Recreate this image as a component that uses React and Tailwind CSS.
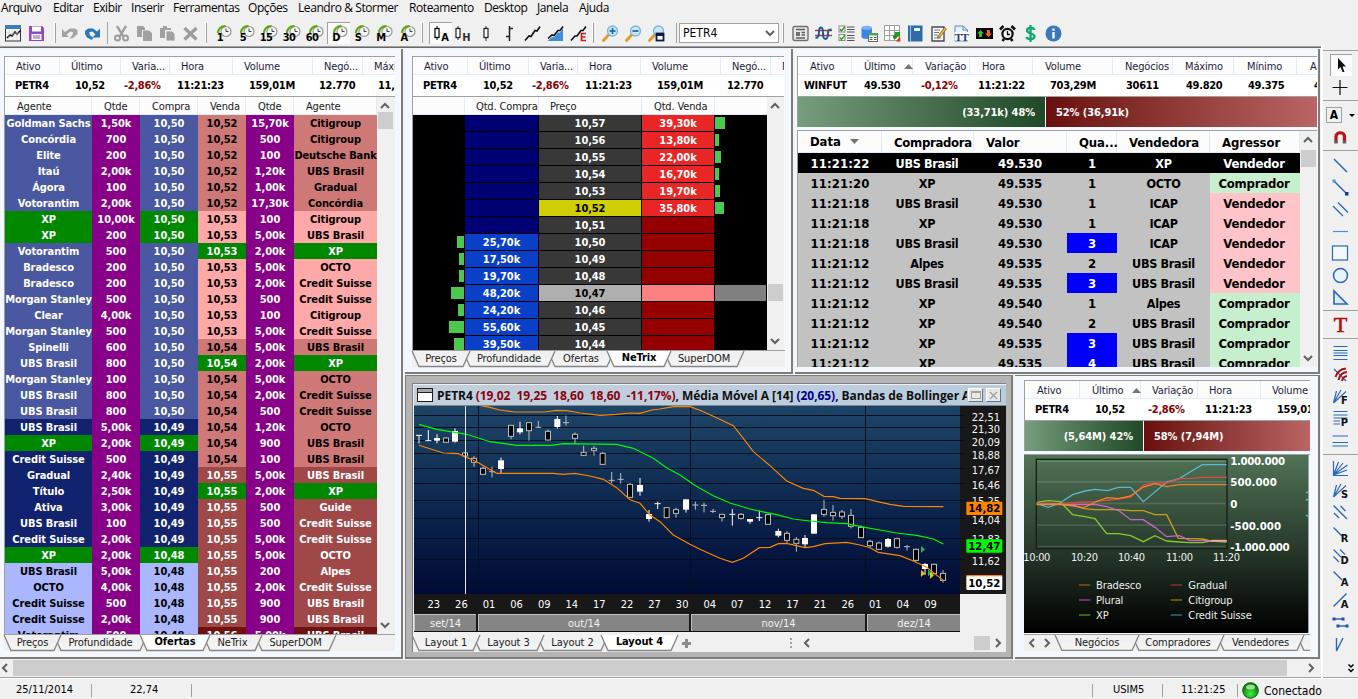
import React from "react";

/* ---------- shared pieces ---------- */

function Chevron({ d, className = "" }) {
  const pts = {
    up: "1,7 5,3 9,7",
    down: "1,3 5,7 9,3",
    left: "7,1 3,5 7,9",
    right: "3,1 7,5 3,9",
  }[d];
  return (
    <svg width="10" height="10" viewBox="0 0 10 10" className={className}>
      <polyline points={pts} fill="none" stroke="#606060" strokeWidth="2" />
    </svg>
  );
}

function VScroll({ thumb }) {
  return (
    <div className="flex w-[18px] flex-none flex-col items-center bg-[#f0f0f0] pl-px">
      <Chevron d="up" className="-ml-[3px] mt-[4px] flex-none" />
      <div className={"-ml-[2px] w-[15px] flex-none bg-[#cdcdcd] " + thumb} />
      <div className="flex-1" />
      <Chevron d="down" className="-ml-[3px] mb-[4px] flex-none" />
    </div>
  );
}

function SortMark({ down }) {
  return (
    <svg width="9" height="5" viewBox="0 0 9 5" className="flex-none">
      <polygon points={down ? "0,0 9,0 4.5,5" : "4.5,0 9,5 0,5"} fill="#757575" />
    </svg>
  );
}

function Ticker({ cols, className = "" }) {
  return (
    <div className={"flex flex-none overflow-hidden border-l border-t border-[#a0a0a0] bg-white " + className}>
      {cols.map((c, i) => (
        <div key={i} className={"h-[39px] flex-none " + c.w}>
          <div className={"flex h-[18px] items-center gap-[9px] whitespace-nowrap border-b border-r border-[#e2ecf8] bg-[#fcfcfc] pt-[2px] leading-[15px] tracking-[-0.15px] text-[#1c1c3c] " + c.hp}>
            {c.h}
            {c.sort && <SortMark />}
          </div>
          <div className={"whitespace-nowrap font-bold leading-[21px] tracking-[-0.3px] " + c.vp + (c.neg ? " text-[#8b0000]" : "")}>{c.v}</div>
        </div>
      ))}
    </div>
  );
}

const petrCols = [
  { w: "w-[55px]", h: "Ativo", hp: "pl-[11px]", v: "PETR4", vp: "pl-[10px]" },
  { w: "w-[61px]", h: "Último", hp: "pl-[11px]", v: "10,52", vp: "pl-[15px]" },
  { w: "w-[49px]", h: "Varia...", hp: "pl-[11px]", v: "-2,86%", vp: "pl-[3px]", neg: true },
  { w: "w-[63px]", h: "Hora", hp: "pl-[11px]", v: "11:21:23", vp: "pl-[7px]" },
  { w: "w-[80px]", h: "Volume", hp: "pl-[11px]", v: "159,01M", vp: "pl-[16px]" },
  { w: "w-[50px]", h: "Negó...", hp: "pl-[11px]", v: "12.770", vp: "pl-[6px]" },
  { w: "w-[64px]", h: "Máximo", hp: "pl-[11px]", v: "11,04", vp: "pl-[15px]" },
];

const petrColsSorted = [
  { w: "w-[55px]", h: "Ativo", hp: "pl-[12px]", v: "PETR4", vp: "pl-[10px]" },
  { w: "w-[61px]", h: "Último", hp: "pl-[12px]", v: "10,52", vp: "pl-[15px]", sort: true },
  { w: "w-[57px]", h: "Variação", hp: "pl-[11px]", v: "-2,86%", vp: "pl-[7px]", neg: true },
  { w: "w-[63px]", h: "Hora", hp: "pl-[11px]", v: "11:21:23", vp: "pl-[7px]" },
  { w: "w-[80px]", h: "Volume", hp: "pl-[11px]", v: "159,01M", vp: "pl-[16px]" },
];

const winCols = [
  { w: "w-[54px]", h: "Ativo", hp: "pl-[12px]", v: "WINFUT", vp: "pl-[6px]" },
  { w: "w-[61px]", h: "Último", hp: "pl-[12px]", v: "49.530", vp: "pl-[12px]", sort: true },
  { w: "w-[57px]", h: "Variação", hp: "pl-[12px]", v: "-0,12%", vp: "pl-[8px]", neg: true },
  { w: "w-[63px]", h: "Hora", hp: "pl-[12px]", v: "11:21:22", vp: "pl-[8px]" },
  { w: "w-[80px]", h: "Volume", hp: "pl-[12px]", v: "703,29M", vp: "pl-[17px]" },
  { w: "w-[60px]", h: "Negócios", hp: "pl-[12px]", v: "30611", vp: "pl-[13px]" },
  { w: "w-[61px]", h: "Máximo", hp: "pl-[12px]", v: "49.820", vp: "pl-[13px]" },
  { w: "w-[63px]", h: "Mínimo", hp: "pl-[13px]", v: "49.375", vp: "pl-[14px]" },
  { w: "w-[40px]", h: "Abertura", hp: "pl-[13px]", v: "49.500", vp: "pl-[17px]" },
];

function Tab({ w, label, active, first }) {
  const mid = w - 7;
  return (
    <div className={"relative flex h-[17px] flex-none items-center justify-center whitespace-nowrap " + (first ? "" : "-ml-[7px] ") + (active ? "z-10 font-bold tracking-[-0.1px]" : "tracking-[-0.1px] text-[#202020]")} style={{ width: w }}>
      <svg width={w} height="17" viewBox={"0 0 " + w + " 17"} className="absolute left-0 top-0 overflow-visible">
        {active ? (
          <polygon points={"0,0 7,16 " + mid + ",16 " + w + ",0"} fill="#ffffff" />
        ) : (
          <polygon points={"4,8 7,16 " + mid + ",16 " + (w - 4) + ",8"} fill="#f3f3f3" />
        )}
        <polyline points={(active || first ? "0,0 " : "3.5,8 ") + "7,15.5 " + mid + ",15.5 " + w + ",0"} fill="none" stroke="#858585" strokeWidth="1.3" />
      </svg>
      <span className={"relative " + (active ? "-top-px" : "")}>{label}</span>
    </div>
  );
}

function Tabs({ tabs, className = "", children, line = true }) {
  return (
    <div className={"flex h-[17px] flex-none bg-[#f0f0f0] " + (line ? "border-t border-[#a0a0a0] " : "") + className}>
      {children}
      {tabs.map((t, i) => (
        <Tab key={i} first={i === 0} w={t[0]} label={t[1]} active={t[2]} />
      ))}
    </div>
  );
}

function Ratio({ left, right, lw }) {
  return (
    <div className="flex h-[31px] flex-none border-l border-t border-[#a0a0a0] font-bold leading-[31px] tracking-[-0.1px] text-white">
      <div className={"mr-px h-[30px] flex-none bg-linear-to-r from-[#769d7d] to-[#1f4927] pr-[10px] text-right " + lw}>{left}</div>
      <div className="h-[30px] flex-1 overflow-hidden whitespace-nowrap bg-linear-to-r from-[#690e0e] to-[#b96565] pl-[10px]">{right}</div>
    </div>
  );
}

/* ---------- offers book ---------- */

const offers = [
  ["Goldman Sachs", "1,50k", "10,50", "10,52", "15,70k", "Citigroup"],
  ["Concórdia", "700", "10,50", "10,52", "500", "Citigroup"],
  ["Elite", "200", "10,50", "10,52", "100", "Deutsche Bank"],
  ["Itaú", "2,00k", "10,50", "10,52", "1,20k", "UBS Brasil"],
  ["Ágora", "100", "10,50", "10,52", "1,00k", "Gradual"],
  ["Votorantim", "2,00k", "10,50", "10,52", "17,30k", "Concórdia"],
  ["XP", "10,00k", "10,50", "10,53", "100", "Citigroup"],
  ["XP", "200", "10,50", "10,53", "5,00k", "UBS Brasil"],
  ["Votorantim", "500", "10,50", "10,53", "2,00k", "XP"],
  ["Bradesco", "200", "10,50", "10,53", "5,00k", "OCTO"],
  ["Bradesco", "200", "10,50", "10,53", "2,00k", "Credit Suisse"],
  ["Morgan Stanley", "500", "10,50", "10,53", "500", "Credit Suisse"],
  ["Clear", "4,00k", "10,50", "10,53", "100", "Citigroup"],
  ["Morgan Stanley", "500", "10,50", "10,53", "5,00k", "Credit Suisse"],
  ["Spinelli", "600", "10,50", "10,54", "5,00k", "UBS Brasil"],
  ["UBS Brasil", "800", "10,50", "10,54", "2,00k", "XP"],
  ["Morgan Stanley", "100", "10,50", "10,54", "5,00k", "OCTO"],
  ["UBS Brasil", "800", "10,50", "10,54", "2,00k", "Credit Suisse"],
  ["UBS Brasil", "800", "10,50", "10,54", "500", "Credit Suisse"],
  ["UBS Brasil", "5,00k", "10,49", "10,54", "1,20k", "OCTO"],
  ["XP", "2,00k", "10,49", "10,54", "900", "UBS Brasil"],
  ["Credit Suisse", "500", "10,49", "10,54", "100", "UBS Brasil"],
  ["Gradual", "2,40k", "10,49", "10,55", "5,00k", "UBS Brasil"],
  ["Título", "2,50k", "10,49", "10,55", "2,00k", "XP"],
  ["Ativa", "3,00k", "10,49", "10,55", "500", "Guide"],
  ["UBS Brasil", "100", "10,49", "10,55", "500", "Credit Suisse"],
  ["Credit Suisse", "2,00k", "10,49", "10,55", "5,00k", "Credit Suisse"],
  ["XP", "2,00k", "10,48", "10,55", "5,00k", "OCTO"],
  ["UBS Brasil", "5,00k", "10,48", "10,55", "200", "Alpes"],
  ["OCTO", "4,00k", "10,48", "10,55", "2,00k", "Credit Suisse"],
  ["Credit Suisse", "500", "10,48", "10,55", "900", "UBS Brasil"],
  ["Credit Suisse", "2,00k", "10,48", "10,55", "900", "UBS Brasil"],
  ["Votorantim", "500", "10,48", "10,56", "5,00k", "UBS Brasil"],
];

const priceTone = {
  "10,50": "bg-[#4958a0] text-white",
  "10,49": "bg-[#11226e] text-white",
  "10,48": "bg-[#aab7ff] text-black",
  "10,52": "bg-[#cf7878] text-black",
  "10,53": "bg-[#ffa8a8] text-black",
  "10,54": "bg-[#cf7878] text-black",
  "10,55": "bg-[#a04747] text-white",
  "10,56": "bg-[#6e1111] text-white",
};
const houseTone = "bg-[#008800] text-white";

function OffersPanel() {
  const head = ["Agente", "Qtde", "Compra", "Venda", "Qtde", "Agente"];
  const grid = "grid grid-cols-[87px_48px_58px_48px_48px_83px]";
  return (
    <section className="flex w-[403px] flex-none flex-col border-b-2 border-r-2 border-[#7c7c7c] bg-[#f3f8fe] pb-[6px] pl-[4px] pr-[7px] pt-[7px]">
      <Ticker cols={petrCols} className="h-[40px] w-[391px]" />
      <div className="flex h-[538px] w-[391px] flex-none overflow-hidden border-l border-t border-[#a0a0a0]">
        <div className="w-[372px] flex-none">
          <div className={grid + " grid-rows-[18px] bg-[#fcfcfc]"}>
            {head.map((h, i) => (
              <div key={i} className="border-b border-r border-[#e2ecf8] pl-[12px] leading-[19px] tracking-[-0.15px] text-[#202020]">{h}</div>
            ))}
          </div>
          {offers.map((o, i) => {
            const buy = o[0] === "XP" ? houseTone : priceTone[o[2]];
            const sell = o[5] === "XP" ? houseTone : priceTone[o[3]];
            const tone = [buy, "bg-[#870087] text-white", buy, sell, "bg-[#870087] text-white", sell];
            return (
              <div key={i} className={grid + " grid-rows-[16px]"}>
                {o.map((t, j) => (
                  <div key={j} className={"flex justify-center overflow-hidden whitespace-nowrap font-bold leading-[17px] tracking-[-0.1px] " + tone[j]}>{t}</div>
                ))}
              </div>
            );
          })}
        </div>
        <VScroll thumb="mt-px h-[17px]" />
      </div>
      <Tabs className="w-[391px]" tabs={[[57, "Preços"], [93, "Profundidade"], [70, "Ofertas", true], [59, "NeTrix"], [81, "SuperDOM"]]} />
    </section>
  );
}

/* ---------- depth ladder ---------- */

const ladder = [
  ["10,57", "", "39,30k", 0, 10],
  ["10,56", "", "13,80k", 0, 4],
  ["10,55", "", "22,00k", 0, 6],
  ["10,54", "", "16,70k", 0, 4],
  ["10,53", "", "19,70k", 0, 5],
  ["10,52", "", "35,80k", 0, 9],
  ["10,51", "", "", 0, 0],
  ["10,50", "25,70k", "", 7, 0],
  ["10,49", "17,50k", "", 5, 0],
  ["10,48", "19,70k", "", 5, 0],
  ["10,47", "48,20k", "", 13, 0],
  ["10,46", "24,20k", "", 6, 0],
  ["10,45", "55,60k", "", 15, 0],
  ["10,44", "39,50k", "", 10, 0],
];

function LadderPanel() {
  return (
    <section className="flex w-[388px] flex-none flex-col border-b-2 border-r-2 border-[#7c7c7c] bg-[#f3f8fe] pl-[7px] pr-[5px] pt-[7px]">
      <Ticker cols={petrCols} className="h-[40px] w-[372px]" />
      <div className="flex h-[254px] w-[372px] flex-none overflow-hidden border-l border-t border-[#a0a0a0]">
        <div className="w-[354px] flex-none bg-black">
          <div className="grid grid-cols-[52px_74px_103px_73px_52px] grid-rows-[18px] bg-[#fcfcfc] leading-[19px] tracking-[-0.15px] text-[#202020]">
            <div className="border-b border-r border-[#e2ecf8]" />
            <div className="whitespace-nowrap border-b border-r border-[#e2ecf8] pl-[11px]">Qtd. Compra</div>
            <div className="border-b border-r border-[#e2ecf8] pl-[11px]">Preço</div>
            <div className="whitespace-nowrap border-b border-r border-[#e2ecf8] pl-[12px]">Qtd. Venda</div>
            <div className="border-b border-[#e2ecf8]" />
          </div>
          {ladder.map(([p, b, s, lb, rb], i) => (
            <div key={i} className="mb-px grid grid-cols-[51px_73px_102px_72px_51px] grid-rows-[16px] gap-x-px text-center font-bold leading-[17px] tracking-[-0.1px] text-white">
              <div className="flex justify-end pt-[2px]">{lb > 0 && <div className="h-[12px] bg-[#4cc94c]" style={{ width: lb }} />}</div>
              <div className={b ? "bg-[#0a3fc8]" : "bg-[#000074]"}>{b}</div>
              <div className={p === "10,52" ? "bg-[#d0d000] text-black" : p === "10,47" ? "bg-[#afafaf] text-black" : "bg-[#383838]"}>{p}</div>
              <div className={s ? "bg-[#e82626]" : p === "10,47" ? "bg-[#ff8080]" : "bg-[#940000]"}>{s}</div>
              <div className={"pt-[2px] " + (p === "10,47" ? "bg-[#808080]" : "")}>{rb > 0 && <div className="h-[12px] bg-[#4cc94c]" style={{ width: rb }} />}</div>
            </div>
          ))}
        </div>
        <VScroll thumb="mt-[173px] h-[17px]" />
      </div>
      <Tabs className="w-[373px]" tabs={[[58, "Preços"], [92, "Profundidade"], [66, "Ofertas"], [64, "NeTrix", true], [80, "SuperDOM"]]} />
    </section>
  );
}

/* ---------- times and trades ---------- */

const trades = [
  ["11:21:22", "UBS Brasil", "49.530", "1", "XP", "Vendedor"],
  ["11:21:20", "XP", "49.535", "1", "OCTO", "Comprador"],
  ["11:21:18", "UBS Brasil", "49.530", "1", "ICAP", "Vendedor"],
  ["11:21:18", "XP", "49.530", "1", "ICAP", "Vendedor"],
  ["11:21:18", "UBS Brasil", "49.530", "3", "ICAP", "Vendedor"],
  ["11:21:12", "Alpes", "49.535", "2", "UBS Brasil", "Vendedor"],
  ["11:21:12", "UBS Brasil", "49.535", "3", "UBS Brasil", "Vendedor"],
  ["11:21:12", "XP", "49.540", "1", "Alpes", "Comprador"],
  ["11:21:12", "XP", "49.540", "2", "UBS Brasil", "Comprador"],
  ["11:21:12", "XP", "49.535", "3", "UBS Brasil", "Comprador"],
  ["11:21:12", "XP", "49.535", "4", "UBS Brasil", "Comprador"],
];

function TradesPanel() {
  const grid = "grid grid-cols-[84px_92px_93px_50px_93px_90px]";
  return (
    <section className="flex w-[525px] flex-none flex-col border-b-2 border-r-2 border-[#7c7c7c] bg-[#f3f8fe] pb-[5px] pl-[2px] pr-[2px] pt-[7px]">
      <Ticker cols={winCols} className="h-[40px] w-[520px]" />
      <div className="flex w-[520px] flex-col">
        <Ratio left="(33,71k) 48%" right="52% (36,91k)" lw="w-[247px]" />
      </div>
      <div className="mt-[3px] flex h-[237px] w-[520px] flex-none overflow-hidden border-l border-t border-[#a0a0a0] text-[13px]">
        <div className="w-[502px] flex-none">
          <div className={grid + " grid-rows-[22px] bg-[#fcfcfc] font-bold leading-[23px] tracking-[-0.1px]"}>
            <div className="flex items-center gap-[9px] border-b border-r border-[#e2ecf8] pl-[12px]">Data <SortMark down /></div>
            <div className="overflow-hidden border-b border-r border-[#e2ecf8] pl-[12px] tracking-[-0.3px]">Compradora</div>
            <div className="border-b border-r border-[#e2ecf8] pl-[12px]">Valor</div>
            <div className="border-b border-r border-[#e2ecf8] pl-[12px]">Qua...</div>
            <div className="border-b border-r border-[#e2ecf8] pl-[12px]">Vendedora</div>
            <div className="border-b border-r border-[#e2ecf8] pl-[12px]">Agressor</div>
          </div>
          {trades.map((t, i) => {
            const sel = i === 0;
            const big = Number(t[3]) >= 3;
            return (
              <div key={i} className={grid + " grid-rows-[20px] text-center font-bold leading-[21px] tracking-[-0.2px] " + (sel ? "bg-black text-white" : "bg-[#c2c2c2]")}>
                <div className="tracking-[0.1px]">{t[0]}</div>
                <div className="pr-[2px] text-[12.5px] tracking-[-0.3px]">{t[1]}</div>
                <div className="pr-[1px]">{t[2]}</div>
                <div className={big ? "bg-[#0000f8] text-white" : ""}>{t[3]}</div>
                <div className="text-[12.5px] tracking-[-0.3px]">{t[4]}</div>
                <div className={"pr-[2px] text-[13px] tracking-[-0.2px] " + (sel ? "" : t[5] === "Vendedor" ? "bg-[#ffc4ca]" : "bg-[#c6efce]")}>{t[5]}</div>
              </div>
            );
          })}
        </div>
        <VScroll thumb="mt-[5px] h-[17px]" />
      </div>
    </section>
  );
}

/* ---------- candle chart ---------- */

// Geometry is kept in thirds of a pixel, origin at the chart frame.
// [x, high, top, bottom, low, kind]; d/D are grey and white doji.
const candles = [
  [57, 181, 181, 181, 205, "D"], [85, 165, 197, 197, 197, "D"], [111, 178, 189, 197, 205, "w"], [138, 186, 189, 202, 204, "b"],
  [165, 160, 168, 200, 203, "w"], [195, 230, 234, 243, 248, "b"], [222, 243, 250, 262, 275, "b"], [249, 275, 280, 298, 299, "b"],
  [276, 275, 290, 290, 307, "d"], [303, 248, 256, 282, 295, "w"], [333, 150, 151, 184, 193, "b"], [360, 140, 160, 172, 178, "w"],
  [387, 142, 143, 167, 197, "b"], [415, 138, 157, 157, 158, "d"], [444, 163, 169, 195, 197, "b"], [472, 123, 132, 156, 161, "w"],
  [498, 122, 143, 143, 152, "d"], [525, 172, 178, 190, 207, "b"], [551, 212, 232, 241, 242, "b"], [582, 213, 220, 226, 242, "b"],
  [608, 231, 235, 268, 270, "b"], [635, 291, 316, 316, 325, "d"], [662, 294, 313, 313, 326, "d"], [690, 324, 328, 367, 368, "b"],
  [720, 309, 330, 350, 362, "w"], [747, 405, 417, 432, 440, "w"], [773, 380, 386, 386, 402, "D"], [800, 397, 398, 428, 430, "b"],
  [828, 398, 404, 415, 428, "b"], [858, 373, 373, 404, 413, "w"], [886, 380, 390, 390, 404, "d"], [912, 383, 391, 391, 412, "d"],
  [939, 402, 409, 409, 414, "d"], [966, 417, 418, 428, 440, "b"], [997, 402, 418, 418, 452, "D"], [1023, 414, 418, 430, 434, "b"],
  [1050, 432, 432, 440, 446, "w"], [1078, 407, 428, 428, 438, "D"], [1104, 416, 419, 448, 449, "b"], [1135, 461, 468, 482, 487, "w"],
  [1161, 468, 475, 496, 503, "b"], [1189, 486, 493, 505, 530, "b"], [1215, 480, 489, 508, 517, "w"], [1242, 418, 418, 476, 476, "w"],
  [1272, 375, 403, 418, 425, "b"], [1299, 390, 412, 422, 437, "b"], [1326, 405, 411, 424, 432, "b"], [1353, 402, 421, 454, 460, "b"],
  [1383, 451, 457, 488, 489, "b"], [1410, 494, 499, 512, 518, "b"], [1437, 500, 504, 523, 525, "b"], [1464, 489, 492, 515, 518, "w"],
  [1491, 488, 491, 517, 521, "b"], [1521, 510, 515, 515, 527, "d"], [1548, 520, 523, 556, 559, "b"], [1575, 564, 567, 582, 600, "w"],
  [1602, 566, 568, 596, 597, "b"], [1629, 585, 595, 616, 623, "b"],
];

const upper = "232,90 270,97 300,105 345,111 435,111 470,106 500,107 540,114 600,121 650,118 690,114 720,115 755,105 780,102 820,95 870,95 900,106 940,124 1000,152 1030,190 1060,230 1110,272 1160,318 1210,340 1240,346 1272,364 1300,365 1320,370 1395,371 1430,379 1470,388 1510,394 1630,395";
const middle = "57,148 110,163 200,178 270,200 350,211 455,211 490,206 650,208 700,220 760,250 800,278 840,300 880,328 900,340 940,362 990,384 1050,402 1100,413 1130,419 1180,432 1230,438 1280,443 1340,446 1395,457 1440,465 1490,474 1550,481 1600,492 1630,507";
const lower = "57,211 130,234 175,236 230,260 290,295 460,295 490,298 525,295 570,303 610,313 650,338 690,374 720,385 750,420 780,440 820,480 870,508 900,523 960,550 997,562 1030,550 1078,518 1110,517 1135,506 1160,505 1215,518 1240,515 1275,506 1340,502 1380,510 1410,518 1435,532 1500,542 1540,558 1580,577 1630,616";

const scaleLabels = [["22,51", 126], ["21,30", 162], ["20,09", 201], ["18,88", 240], ["17,67", 285], ["16,46", 330], ["15,25", 379], ["14,04", 435], ["12,83", 493], ["11,62", 558]];

function CandleChart() {
  return (
    <svg width="592" height="188" viewBox="42 93 1776 564" className="flex-none">
      <defs>
        <linearGradient id="sky" x1="0" y1="0" x2="0" y2="1">
          <stop offset="0" stopColor="#1e4568" />
          <stop offset="0.5" stopColor="#0e2950" />
          <stop offset="1" stopColor="#000a35" />
        </linearGradient>
      </defs>
      <rect x="42" y="90" width="1638" height="567" fill="url(#sky)" />
      <rect x="1680" y="90" width="138" height="567" fill="#181818" />
      {[121, 157, 196, 235, 280, 325, 376, 430, 490, 553, 625].map((y) => (
        <rect key={y} x="42" y={y - 1} width="1653" height="3" fill="#03101f" />
      ))}
      {[235, 871, 1396].map((x) => (
        <rect key={x} x={x - 1} y="90" width="3" height="567" fill="#03101f" />
      ))}
      {candles.map(([x, h, t, b, l, k], i) => {
        const ink = k === "w" || k === "D" ? "#ffffff" : "#bcbcbc";
        return (
          <g key={i}>
            <rect x={x - 1.5} y={h} width="3" height={Math.max(l - h, 3)} fill={ink} />
            {k === "w" && <rect x={x - 9} y={t} width="18" height={b - t} fill="#ffffff" />}
            {k === "b" && <rect x={x - 7.5} y={t} width="15" height={b - t} fill="#000000" stroke={ink} strokeWidth="3" />}
            {(k === "d" || k === "D") && <rect x={x - 9} y={t - 1.5} width="18" height="3" fill={ink} />}
          </g>
        );
      })}
      <g fill="none" strokeWidth="3.4">
        <polyline points={upper} stroke="#ff8500" />
        <polyline points={middle} stroke="#00f800" />
        <polyline points={lower} stroke="#ff8500" />
      </g>
      <rect x="195" y="90" width="3" height="567" fill="#e8e8e8" />
      <polygon points="1563,513 1575,523 1563,534" fill="#2fae5a" />
      <polygon points="1563,585 1575,595 1563,606" fill="#f0c800" />
      <polygon points="1584,583 1596,593 1584,604" fill="#2fae5a" />
      <polygon points="1590,591 1602,601 1590,612" fill="#f0c800" />
      <g fontSize="33" fill="#f4f4f4" textAnchor="end">
        {scaleLabels.map(([t, y]) => (
          <text key={t} x="1800" y={y + 12}>{t}</text>
        ))}
      </g>
      <rect x="1699" y="380" width="108" height="40" rx="3" fill="#ff8500" />
      <rect x="1699" y="493" width="108" height="40" rx="3" fill="#00f800" />
      <rect x="1699" y="600" width="108" height="6" fill="#ff8500" />
      <rect x="1699" y="604" width="108" height="41" rx="3" fill="#ffffff" />
      <g fontSize="34" fontWeight="bold" textAnchor="middle" fill="#000000">
        <text x="1753" y="412">14,82</text>
        <text x="1753" y="525">12,47</text>
        <text x="1753" y="637">10,52</text>
      </g>
    </svg>
  );
}

const days = ["23", "26", "01", "06", "09", "14", "17", "22", "27", "30", "04", "07", "12", "17", "21", "26", "01", "04", "09"];

function ChartWindow() {
  return (
    <section className="flex w-[608px] flex-none flex-col border-b-2 border-l border-r-2 border-t border-[#7c7c7c] bg-[#b4b4b4] pl-[6px] pr-[5px] pt-[7px]">
      <div className="flex h-[269px] w-[594px] flex-none flex-col overflow-hidden border-l border-t border-[#808080] bg-[#f0f0f0] pl-px pt-px">
        <div className="flex h-[21px] flex-none items-center overflow-hidden border-b border-[#7c8890] bg-linear-to-r from-[#c2cfdc] to-[#b9cde0] pl-[3px]">
          <svg width="16" height="14" viewBox="0 0 16 14" className="flex-none">
            <rect x="0.5" y="0.5" width="15" height="13" fill="#ffffff" stroke="#202020" />
            <rect x="1" y="1" width="14" height="3" fill="#a8a8a8" />
            <rect x="1" y="4" width="14" height="1" fill="#202020" />
          </svg>
          <div className="ml-[4px] w-[530px] flex-none overflow-hidden whitespace-pre font-['Open_Sans'] text-[12px] font-bold leading-[19px] tracking-[-0.06px] text-[#101010] [font-stretch:normal]">
            PETR4 <span className="text-[#8b0010]">(19,02  19,25  18,60  18,60  -11,17%)</span>, Média Móvel A [14] <span className="text-[#00008b]">(20,65)</span>, Bandas de Bollinger A [20]
          </div>
          <div className="ml-px flex h-[14px] w-[15px] flex-none items-center justify-center border border-b-[#707070] border-l-white border-r-[#707070] border-t-white bg-[#e8e8e8]">
            <div className="h-[8px] w-[10px] border border-t-2 border-[#a0a0a0]" />
          </div>
          <div className="ml-[3px] flex h-[14px] w-[15px] flex-none items-center justify-center border border-b-[#707070] border-l-white border-r-[#707070] border-t-white bg-[#e8e8e8]">
            <svg width="9" height="9" viewBox="0 0 9 9"><path d="M1 1L8 8M8 1L1 8" stroke="#a0a0a0" strokeWidth="1.4" /></svg>
          </div>
        </div>
        <CandleChart />
        <div className="h-[38px] w-[546px] flex-none border-b border-[#101010] bg-[#181818] text-white">
          <div className="flex h-[20px] pl-[6px] text-center text-[11px] leading-[21px]">
            {days.map((d, i) => (
              <div key={i} className="w-[27.6px] flex-none">{d}</div>
            ))}
          </div>
          <div className="grid grid-cols-[62px_211px_174px_93px] grid-rows-[17px] gap-x-[2px] text-center leading-[17px] text-[#f2f2f2]">
            {["set/14", "out/14", "nov/14", "dez/14"].map((m) => (
              <div key={m} className="border-l border-t border-[#c0c0c0] bg-[#858585]">{m}</div>
            ))}
          </div>
        </div>
        <div className="mt-[3px] flex h-[17px] flex-none items-start">
          <Tabs line={false} className="-ml-[2px]" tabs={[[68, "Layout 1"], [71, "Layout 3"], [71, "Layout 2"], [77, "Layout 4", true]]} />
          <svg width="9" height="9" viewBox="0 0 9 9" className="ml-[4px] mt-[4px] flex-none"><path d="M4.500 0V9M0 4.500H9" stroke="#8c8c8c" strokeWidth="3" /></svg>
          <svg width="2" height="10" viewBox="0 0 2 10" className="ml-[99px] mt-[3px] flex-none"><path d="M0 0h2v2h-2zM0 4h2v2h-2zM0 8h2v2h-2z" fill="#a0a0a0" /></svg>
          <Chevron d="left" className="ml-[10px] mt-[3px] flex-none" />
          <div className="ml-[162px] mt-px h-[14px] w-[16px] flex-none bg-[#cdcdcd]" />
          <Chevron d="right" className="ml-[3px] mt-[3px] flex-none" />
        </div>
      </div>
    </section>
  );
}

/* ---------- brokers panel ---------- */

const brokers = [
  ["#8cd832", "80,398 115,393 150,396 188,435 225,441 255,447 290,492 325,492 362,498 400,516 435,498 470,514 508,517 540,519 577,519 600,514 650,517"],
  ["#d9a818", "80,403 150,404 190,407 222,417 255,420 325,420 362,423 400,423 435,435 470,435 505,506 545,507 577,508 600,513 650,513"],
  ["#d868dc", "80,405 255,404 290,411 325,422 362,450 400,450 435,473 470,501 508,498 540,513 650,513"],
  ["#5cc4dc", "80,402 115,413 150,400 188,375 225,364 255,359 292,363 325,353 362,353 400,396 470,337 508,327 540,307 577,285 650,285"],
  ["#e84848", "80,401 150,402 220,397 255,396 325,388 362,382 400,346 435,340 470,340 508,327 545,326 577,323 650,323"],
  ["#ff8a1e", "80,404 150,403 222,414 255,397 292,384 325,387 362,379 400,352 435,342 470,351 508,345 650,345"],
];

const legend = [
  ["#95550f", "Bradesco", 207, 645], ["#933030", "Gradual", 482, 645],
  ["#9c3c9f", "Plural", 207, 690], ["#94710f", "Citigroup", 482, 690],
  ["#589015", "XP", 207, 735], ["#38788c", "Credit Suisse", 482, 735],
];

function BrokerChart() {
  return (
    <svg width="284" height="178" viewBox="42 256 852 534" className="flex-none">
      <defs>
        <linearGradient id="moss" x1="0" y1="0" x2="0" y2="1">
          <stop offset="0" stopColor="#517457" />
          <stop offset="0.5" stopColor="#2a3d2e" />
          <stop offset="1" stopColor="#000000" />
        </linearGradient>
      </defs>
      <rect x="42" y="250" width="852" height="540" fill="url(#moss)" />
      {[274, 336, 401, 466, 530].map((y) => (
        <rect key={y} x="80" y={y - 2} width="570" height="5" fill="#ffffff" opacity="0.13" />
      ))}
      <rect x="79" y="269" width="572" height="268" fill="none" stroke="#151f17" strokeWidth="4" />
      {brokers.map(([c, p]) => (
        <polyline key={c} points={p} fill="none" stroke={c} strokeWidth="4" opacity="0.9" />
      ))}
      <polyline points="604,513 650,513" stroke="#f7a8a0" strokeWidth="5" />
      <path d="M888 370l6-4M888 392l6-4M888 436l6 4" stroke="#5cc4dc" strokeWidth="4" />
      <g fill="#ffffff" fontSize="34" fontWeight="bold">
        {[["1.000.000", 273], ["500.000", 336], ["0", 402], ["-500.000", 468], ["-1.000.000", 530]].map(([t, y]) => (
          <text key={t} x="661" y={y + 13} textLength={t.length > 8 ? (t[0] === "-" ? 178 : 164) : undefined}>{t}</text>
        ))}
      </g>
      <g fill="#f0f0f0" fontSize="33" textAnchor="middle">
        {[["10:00", 80], ["10:20", 223], ["10:40", 364], ["11:00", 508], ["11:20", 649]].map(([t, x]) => (
          <text key={t} x={x} y="573" letterSpacing="-1">{t}</text>
        ))}
      </g>
      <g fill="#f0f0f0" fontSize="33">
        {legend.map(([c, t, x, y]) => (
          <g key={t}>
            <rect x={x} y={y - 1} width="34" height="4" fill={c} />
            <text x={x + (x > 300 ? 53 : 51)} y={y + 12} letterSpacing="-0.3">{t}</text>
          </g>
        ))}
      </g>
    </svg>
  );
}

function BrokersPanel() {
  return (
    <section className="flex w-[305px] flex-none flex-col border-b-2 border-r-2 border-t border-[#7c7c7c] bg-[#f3f8fe] pl-[9px] pt-[4px]">
      <Ticker cols={petrColsSorted} className="h-[40px] w-[286px]" />
      <div className="flex w-[286px] flex-col">
        <Ratio left="(5,64M) 42%" right="58% (7,94M)" lw="w-[118px]" />
      </div>
      <div className="mt-[3px] flex w-[286px] flex-none border-t border-[#a0a0a0]">
        <BrokerChart />
        <div className="w-px bg-[#a0a0a0]" />
      </div>
      <Tabs className="mt-[1px] w-[286px] overflow-hidden" tabs={[[84, "Negócios"], [92, "Compradores"], [87, "Vendedores"], [70, ""]]}>
        <Chevron d="left" className="ml-[3px] mt-[3px] flex-none" />
        <Chevron d="right" className="ml-[5px] mr-[3px] mt-[3px] flex-none" />
      </Tabs>
    </section>
  );
}

/* ---------- top toolbar ---------- */

const Slot = ({ children, pressed }) => (
  <div className={"flex h-[22px] w-[23px] flex-none items-center justify-center " + (pressed ? "border-l border-t border-[#a0a0a0] bg-[#fafafa]" : "")}>{children}</div>
);
const Ic = ({ children }) => (
  <svg width="17" height="17" viewBox="0 0 17 17" fill="none" className="flex-none overflow-visible">{children}</svg>
);
const Sep = () => (
  <div className="mx-[3px] flex h-[20px] w-[4px] flex-none">
    <div className="w-px bg-white" />
    <div className="w-px bg-[#a0a0a0]" />
  </div>
);

function Clock({ t }) {
  return (
    <Ic>
      <circle cx="11" cy="6.500" r="5" fill="#f4f4f4" stroke="#9a9a9a" strokeWidth="1.200" />
      <path d="M3 8C3 4 6 1 10.500 1.200" stroke="#5ba812" strokeWidth="2.200" />
      <path d="M11 3.500V6.500H13.500" stroke="#404040" strokeWidth="1" />
      <text x="5" y="16" fontSize="11" fontWeight="bold" fill="#000" textAnchor="middle" letterSpacing="-0.6">{t}</text>
    </Ic>
  );
}

function Lens({ kind }) {
  return (
    <Ic>
      <path d="M1.500 15.500L7 9.500" stroke="#e59a2c" strokeWidth="3" strokeLinecap="round" />
      <circle cx="10.500" cy="6" r="5" fill="#c8e6f8" stroke="#7fb4d8" strokeWidth="1.300" />
      {kind !== "box" && <path d="M7.500 6H13.500" stroke="#1c6ea8" strokeWidth="1.800" />}
      {kind === "in" && <path d="M10.500 3V9" stroke="#1c6ea8" strokeWidth="1.800" />}
      {kind === "box" && (
        <>
          <rect x="8.500" y="8.500" width="7" height="7" fill="#fff" stroke="#0b1c48" strokeWidth="1.800" />
          <path d="M8 10H16" stroke="#0b1c48" strokeWidth="2" />
        </>
      )}
    </Ic>
  );
}

function Toolbar() {
  return (
    <div className="flex h-[29px] flex-none items-center pb-px pl-[2px] pt-[4px]">
      <Slot><Ic><rect x="0.500" y="1" width="15" height="15" fill="#f4f4f4" stroke="#303030" /><rect x="0" y="0" width="16" height="4" fill="#3b7fb8" /><path d="M2 13L5 10L7 11L10 7L12 9L15.500 5.500" stroke="#101010" strokeWidth="1.600" /><path d="M4 5V15M8 5V15M12 5V15M1 8H15" stroke="#c8c8c8" strokeWidth="0.500" /></Ic></Slot>
      <Slot><Ic><path d="M1 1H14L16 3V16H1Z" fill="#8e4bbf" /><rect x="4" y="1.500" width="9" height="5" fill="#fff" /><rect x="3.500" y="9" width="10" height="6" fill="#fff" /><path d="M5 11H12M5 13H12" stroke="#8e4bbf" /></Ic></Slot>
      <div className="w-[3px]" /><Sep /><div className="-ml-[3px]" />
      <Slot><Ic><path d="M1 4V12H8L5.500 9.500L9.500 6.500L12 7L11.500 10L8.500 13.500L12 13L16.500 9V5L13.500 3.500H9L4 7Z" fill="#a3a3a3" /></Ic></Slot>
      <Slot><Ic><path d="M16 3.500V12.500H8L11.500 9.500L8.500 6.500L5.500 7L5.500 9.500L9 13L8 15L3 12.500L1 9V6L4 3.500H9L13 6.500Z" fill="#2b78b4" /></Ic></Slot>
      <div className="ml-[3px] mr-[2px] h-[22px] w-px bg-[#a0a0a0]" />
      <Slot><Ic><path d="M4 1L10 11M13 1L7 11" stroke="#9c9c9c" strokeWidth="2.400" /><circle cx="4.500" cy="13" r="2.500" stroke="#9c9c9c" strokeWidth="2" /><circle cx="12.500" cy="13" r="2.500" stroke="#9c9c9c" strokeWidth="2" /></Ic></Slot>
      <Slot><Ic><path d="M1 1H7L9 3V5H6V12H1Z" fill="#a0a0a0" /><path d="M7 5.500H13L16 8V16H7Z" fill="#a0a0a0" /></Ic></Slot>
      <Slot><Ic><path d="M1 3H4V1H8V3H12V5H6V13H1Z" fill="#a0a0a0" /><path d="M7 6H13L16 9V16H7Z" fill="#a0a0a0" stroke="#f0f0f0" strokeWidth="0.800" /></Ic></Slot>
      <Slot><Ic><path d="M2.500 3L14.500 14.500M14.500 3L2.500 14.500" stroke="#9c9c9c" strokeWidth="3.200" /></Ic></Slot>
      <Sep />
      {["1", "5", "15", "30", "60", "D", "S", "M", "A"].map((t) => (
        <Slot key={t} pressed={t === "D"}><Clock t={t} /></Slot>
      ))}
      <div className="-ml-px" /><Sep /><div className="w-px" />
      <Slot pressed><Ic><path d="M4 1V15" stroke="#000" /><rect x="2" y="3.500" width="4" height="9" fill="#fff" stroke="#000" strokeWidth="1.200" /><text x="12" y="16" fontSize="11" fontWeight="bold" fill="#000" textAnchor="middle">A</text></Ic></Slot>
      <Slot><Ic><path d="M3 1V15" stroke="#202020" /><rect x="1" y="3.500" width="4" height="9" fill="#fff" stroke="#202020" strokeWidth="1.200" /><text x="11.500" y="16" fontSize="11" fontWeight="bold" fill="#303030" textAnchor="middle">H</text></Ic></Slot>
      <Slot><Ic><path d="M8 1V16" stroke="#202020" /><rect x="6" y="3.500" width="4" height="9" fill="#fff" stroke="#202020" strokeWidth="1.200" /></Ic></Slot>
      <Slot><Ic><path d="M8.500 1V16M8 3.500H12M5 11.500H9" stroke="#202020" strokeWidth="1.500" /></Ic></Slot>
      <Slot><Ic><path d="M1 15.500L5 11L7 11.500L11 5.500L13 6L16 1.500" stroke="#101010" strokeWidth="1.600" /></Ic></Slot>
      <Slot><Ic><path d="M1 15.500L5 12L7 12.500L11 7.500L13 7.500L16 3V16H1Z" fill="#3d8fdc" /><path d="M1 13.500L5 10L7 10.500L11 5.500L13 5.500L16 1.500" stroke="#101010" strokeWidth="1.600" /></Ic></Slot>
      <Slot><Ic><path d="M1 15.500L5 11L7 11L11 5.500L13 5.500L16 1.500" stroke="#101010" strokeWidth="1.600" /><path d="M16 8.500H11.500V15.500H16M11.500 12H15.500" stroke="#c02020" strokeWidth="1.700" /></Ic></Slot>
      <div className="-ml-px" /><Sep />
      <Slot><Lens kind="in" /></Slot>
      <Slot><Lens kind="out" /></Slot>
      <Slot><Lens kind="box" /></Slot>
      <div className="ml-[8px] mr-px h-[20px] w-px bg-[#a0a0a0]" />
      <div className="ml-px flex h-[20px] w-[100px] flex-none items-center justify-between border border-[#a0a0a0] bg-white pl-[3px] pr-[3px] text-[12px]">
        PETR4
        <Chevron d="down" />
      </div>
      <Sep />
      <Slot><Ic><rect x="1" y="1.500" width="15" height="14" rx="1.500" fill="#e8e8e8" stroke="#707070" strokeWidth="1.400" /><path d="M4 4.500H13M9.500 7.500H13M9.500 10H13M4 13H13" stroke="#606060" strokeWidth="1.300" /><rect x="4" y="7" width="4" height="4" fill="#707070" /></Ic></Slot>
      <Slot><Ic><path d="M0 5.500H17M0 10.500H17" stroke="#d03030" strokeWidth="1.300" /><path d="M0.500 13C3 13 4 11 4 7C4 3.500 4.500 2.500 6 2.500S8 4 8 8C8 12 8.500 14 10.500 14S13 12 13 8C13 5.500 13.500 4.500 16.500 4.500" stroke="#0a5fa0" strokeWidth="1.900" /></Ic></Slot>
      <Slot><Ic><rect x="1" y="1" width="6" height="6" fill="#fff" stroke="#8a8a8a" /><rect x="1" y="9.500" width="6" height="6" fill="#fff" stroke="#8a8a8a" /><path d="M2 4L3.500 6L7 1.500M2 12.500L3.500 14.500L7 10" stroke="#3ea01e" strokeWidth="1.500" /><path d="M9 2H16.500M9 4.500H16.500M9 7H16.500M9 10.500H16.500M9 13H16.500M9 15.500H16.500" stroke="#505050" strokeWidth="1.200" /></Ic></Slot>
      <Slot><Ic><path d="M0.500 3V12C0.500 14.500 11 14.500 11 12V3Z" fill="#3c86e8" /><ellipse cx="5.750" cy="2.800" rx="5.200" ry="2" fill="#7ab0f4" /><rect x="7.500" y="8.500" width="9" height="8" fill="#fff" stroke="#5a6a5a" /><rect x="7.500" y="8" width="9" height="2.500" fill="#4aa84a" /><path d="M9 12.500H11.500M13 12.500H15.500M9 14.500H11.500M13 14.500H15.500" stroke="#505050" /></Ic></Slot>
      <Slot><Ic><rect x="0.500" y="0.500" width="15" height="15" fill="#fff" stroke="#a0a0a0" /><path d="M0.500 5.500H15.500M0.500 10.500H15.500M5.500 0.500V15.500M10.500 0.500V15.500" stroke="#a0a0a0" /><path d="M11 7H16V11L11 13Z" fill="#1fa01f" /><path d="M16 11L12 16.500H16.500Z" fill="#e03010" /><circle cx="11" cy="12" r="2" fill="#189018" /></Ic></Slot>
      <Slot><Ic><rect x="1" y="0.500" width="14.500" height="16" fill="#2d6ca8" /><path d="M3.500 0.500V16.500" stroke="#9cc4e8" /><rect x="7" y="3" width="6" height="3" fill="#e8f2fa" /></Ic></Slot>
      <Slot><Ic><path d="M2 2H14V16H2Z" fill="#fdfdfd" stroke="#404a58" strokeWidth="1.400" /><path d="M4 5H10M4 7.500H9M4 10H8M4 13H11" stroke="#707880" /><path d="M8 11L14.500 2.500L16.500 4L10 12L7.500 13Z" fill="#f0b030" stroke="#805010" strokeWidth="0.700" /></Ic></Slot>
      <Slot><Ic><path d="M2 1H10L14.500 5V16H2Z" fill="#e8f2fa" stroke="#5a8ab8" /><path d="M10 1V5H14.500" stroke="#5a8ab8" /><rect x="1.500" y="7" width="14" height="8.500" fill="#f6fafd" /><text x="8.500" y="15.500" fontSize="11" fontWeight="bold" fill="#1c3c68" textAnchor="middle" fontFamily="Liberation Serif" letterSpacing="-0.500">TT</text></Ic></Slot>
      <Slot><Ic><rect x="0" y="3" width="17" height="11" fill="#000" /><path d="M4.500 5L8 8.500H6V12H3V8.500H1Z" fill="#30c030" /><path d="M12.500 12L9 8.500H11V5H14V8.500H16Z" fill="#ff6010" /></Ic></Slot>
      <Slot><Ic><circle cx="8.500" cy="9" r="5.200" fill="#101010" stroke="#101010" strokeWidth="2" /><circle cx="8.500" cy="9" r="4" fill="#f6f6f6" /><path d="M1 4.500L4.500 1M16 4.500L12.500 1M3.500 16L5 14M13.500 16L12 14" stroke="#101010" strokeWidth="2.600" /><path d="M8.500 6V9.500H11" stroke="#101010" strokeWidth="1.300" /></Ic></Slot>
      <Slot><Ic><path d="M12.500 5C12 2.500 5 2 5 5.500S12.500 8 12.500 11.500S5 14.800 4.500 12M8.500 0V17" stroke="#10a878" strokeWidth="2.300" /></Ic></Slot>
      <Slot><Ic><circle cx="8.500" cy="8.500" r="8" fill="#3c78b8" /><path d="M8.500 7V13.500M8.500 3.500V5.700" stroke="#fff" strokeWidth="2.400" /></Ic></Slot>
    </div>
  );
}

/* ---------- drawing tools ---------- */

const blue = "#2a68b8";
const Tool = ({ children, pressed, h = "h-[22px]" }) => (
  <div className={"flex w-[35px] flex-none items-center justify-center " + h}>
    <div className={pressed ? "flex h-[22px] w-[22px] items-center justify-center border-l border-t border-[#a0a0a0] bg-[#fbfbfb]" : ""}>
      <Ic>{children}</Ic>
    </div>
  </div>
);
const Letter = ({ t }) => (
  <text x="12.500" y="16" fontSize="11" fontWeight="bold" fill="#101010" textAnchor="middle">{t}</text>
);
const Rule = () => <div className="h-px w-full flex-none bg-[#a0a0a0]" />;
const Gap = ({ h }) => <div className={"flex-none " + h} />;

function DrawBar() {
  const fan = "M1.500 15L4.500 3M1.500 15L9 2M1.500 15L14 3.500";
  const tight = "h-[21.8px]";
  return (
    <div className="flex w-[37px] flex-none flex-col border-l-2 border-white bg-[#f0f0f0]">
      <Gap h="h-[4px]" />
      <Rule />
      <Gap h="h-[3px]" />
      <Tool pressed><path d="M5 1V12.500L7.500 10L9.500 15H11.500L9.500 9.500H13Z" fill="#101010" /></Tool>
      <Tool><path d="M8 1V16M0.500 8.500H15.500" stroke="#101010" strokeWidth="1.200" /></Tool>
      <Gap h="h-[2px]" />
      <Rule />
      <div className="flex h-[28px] flex-none items-center pl-[3px]">
        <div className="h-[16px] w-[16px] border border-[#a0a0a0] text-center text-[12px] font-bold leading-[15px]">A</div>
        <svg width="6" height="3" viewBox="0 0 6 3" className="ml-[7px]"><path d="M0 0H6L3 3Z" fill="#000" /></svg>
      </div>
      <Tool h="h-[17px]"><path d="M4 13.500V7.500C4 2.500 12.500 2.500 12.500 7.500V13.500" stroke="#b81414" strokeWidth="3.200" /><path d="M4 11.500V14.500M12.500 11.500V14.500" stroke="#606060" strokeWidth="3.400" /></Tool>
      <Gap h="h-[4px]" />
      <Rule />
      <Gap h="h-[3px]" />
      <Tool><path d="M2 2L15 15" stroke={blue} strokeWidth="1.500" /></Tool>
      <Tool><path d="M2 2L14 14" stroke={blue} strokeWidth="1.500" /><rect x="0.500" y="0.500" width="3" height="3" fill="#4c98e0" /><rect x="13" y="13" width="3.500" height="3.500" fill="#123c88" /></Tool>
      <Tool><path d="M1 5L11 15M6 1.500L16 11.500" stroke={blue} strokeWidth="1.400" /></Tool>
      <Tool><path d="M1 8.500H16" stroke="#4a90d8" strokeWidth="1.200" /></Tool>
      <Tool><rect x="0.500" y="1" width="15" height="14" fill="#f4f8fc" stroke={blue} strokeWidth="1.200" /></Tool>
      <Tool><circle cx="8.500" cy="8.500" r="7" stroke={blue} strokeWidth="1.500" fill="#eaf2fb" /></Tool>
      <Tool><path d="M2 2V15H15Z" stroke={blue} strokeWidth="1.600" fill="#dcebfa" /></Tool>
      <Gap h="h-[2px]" />
      <Rule />
      <Tool h="h-[27px]"><text x="8.500" y="16" fontSize="22" fontWeight="normal" fontFamily="Liberation Serif" fill="#b01010" stroke="#b01010" strokeWidth="0.600" textAnchor="middle">T</text></Tool>
      <Rule />
      <Gap h="h-[3px]" />
      <Tool h={tight}><path d="M1.500 2.500H15.500M1.500 6.500H15.500M1.500 9H15.500M1.500 11.500H15.500M1.500 15.500H15.500" stroke={blue} strokeWidth="1.200" /></Tool>
      <Tool h={tight}><path d="M2 3L14 15" stroke={blue} strokeWidth="1.200" /><path d="M3.500 11C5 6.500 8.500 3 14 2.500M6.500 14C7.500 9.500 10 6.500 15 6M10 15C10.500 12.500 12 10.500 15 10" stroke="#a81414" strokeWidth="2" /></Tool>
      <Tool h={tight}><path d={fan} stroke={blue} strokeWidth="1.200" /><Letter t="F" /></Tool>
      <Tool h={tight}><path d="M1.500 1.500H15.500M1.500 5H15.500M1.500 8H15.500M1.500 11H8M1.500 14H8" stroke={blue} strokeWidth="1.100" /><Letter t="P" /></Tool>
      <Tool h={tight}><path d="M0.500 4H16M0.500 10.500H16M0.500 14H16" stroke={blue} strokeWidth="1.200" /></Tool>
      <Gap h="h-[3px]" />
      <Rule />
      <Gap h="h-[3px]" />
      <Tool><path d="M1.500 1V15.500H16M1.500 15L6.500 2M1.500 15L11 3M1.500 15L15.500 5M1.500 15L15 10" stroke={blue} strokeWidth="1.200" /></Tool>
      <Tool><path d={fan} stroke={blue} strokeWidth="1.200" /><Letter t="S" /></Tool>
      <Tool><path d="M2 9L7 14M1.500 1.500L15 15M8.500 2L13.500 7" stroke={blue} strokeWidth="1.400" /></Tool>
      <Tool><path d="M1.500 1.500L10 10" stroke={blue} strokeWidth="1.400" /><Letter t="R" /></Tool>
      <Tool><path d="M1.500 1.500L9 9M1.500 8.500L7 14M8 1.500L13 6.500" stroke={blue} strokeWidth="1.200" /><Letter t="D" /></Tool>
      <Tool><path d="M1.500 1.500L10 10" stroke={blue} strokeWidth="1.400" /><Letter t="A" /></Tool>
      <Tool><path d="M1.500 14.500L14.500 1.500" stroke={blue} strokeWidth="1.400" /><Letter t="A" /></Tool>
      <Tool><path d="M1.500 5H11M6 12H15" stroke={blue} strokeWidth="1.400" /><path d="M0.500 3.500h3v3h-3zM9.500 3.500h3v3h-3zM4.500 10.500h3v3h-3zM13.500 10.500h3v3h-3z" fill="#1c54a8" /></Tool>
      <Tool><path d="M4.500 2V15L11 2" stroke={blue} strokeWidth="1.400" /></Tool>
      <div className="flex-1" />
      <svg width="6" height="9" viewBox="0 0 6 9" className="mb-[4px] ml-[25px] flex-none"><path d="M0.500 0.500L3 3L5.500 0.500M0.500 5L3 7.500L5.500 5" fill="none" stroke="#000" strokeWidth="1.500" /></svg>
      <Rule />
    </div>
  );
}

/* ---------- shell ---------- */

const menu = [
  ["Arquivo", "w-[52px]"], ["Editar", "w-[40px]"], ["Exibir", "w-[38px]"], ["Inserir", "w-[42px]"], ["Ferramentas", "w-[75px]"], ["Opções", "w-[50px]"],
  ["Leandro & Stormer", "w-[111px]"], ["Roteamento", "w-[75px]"], ["Desktop", "w-[53px]"], ["Janela", "w-[42px]"], ["Ajuda", "w-[42px]"],
];

export default function App() {
  return (
    <div className="flex h-[699px] w-[1358px] flex-col overflow-hidden bg-[#f0f0f0] font-['DejaVu_Sans_Condensed','DejaVu_Sans',sans-serif] text-[11px] text-black [font-stretch:condensed]">
      <nav className="flex h-[17px] flex-none pl-[1px] font-['Open_Sans',sans-serif] text-[12px] leading-[16px] tracking-[-0.42px] [font-stretch:normal]">
        {menu.map(([m, w]) => (
          <div key={m} className={"flex-none whitespace-nowrap " + w}>{m}</div>
        ))}
      </nav>
      <Toolbar />
      <div className="flex h-[632px] flex-none">
        <div className="flex w-[1321px] flex-none flex-col">
          <div className="h-[2px] flex-none border-t border-[#a0a0a0] bg-[#696969]" />
          <div className="flex h-[611px] flex-none gap-[2px] bg-[#f4f4f4] pt-[1px]">
            <OffersPanel />
            <div className="flex flex-col gap-px">
              <div className="flex h-[325px] flex-none gap-[2px]">
                <LadderPanel />
                <TradesPanel />
              </div>
              <div className="flex h-[284px] flex-none gap-[2px]">
                <ChartWindow />
                <BrokersPanel />
              </div>
            </div>
          </div>
          <div className="flex h-[19px] flex-none items-center border-b border-[#a0a0a0]">
            <Chevron d="left" />
            <div className="ml-[3px] h-[16px] w-[1274px] flex-none bg-[#cdcdcd]" />
            <Chevron d="right" className="ml-[19px]" />
          </div>
        </div>
        <DrawBar />
      </div>
      <footer className="flex h-[21px] flex-none items-center border-t border-white pt-[3px] text-[11px]">
        <div className="w-[91px] pl-[16px]">25/11/2014</div>
        <div className="h-[13px] w-px bg-[#a0a0a0]" />
        <div className="w-[99px] pl-[38px]">22,74</div>
        <div className="h-[13px] w-px bg-[#a0a0a0]" />
        <div className="w-[900px]" />
        <div className="h-[13px] w-px bg-[#a0a0a0]" />
        <div className="w-[69px] pl-[20px]">USIM5</div>
        <div className="h-[13px] w-px bg-[#a0a0a0]" />
        <div className="w-[74px] pl-[18px]">11:21:25</div>
        <div className="h-[13px] w-px bg-[#a0a0a0]" />
        <svg width="17" height="17" viewBox="0 0 17 17" className="ml-[4px]">
          <defs>
            <radialGradient id="led" cx="0.5" cy="0.7" r="0.6">
              <stop offset="0" stopColor="#40f040" />
              <stop offset="1" stopColor="#087808" />
            </radialGradient>
          </defs>
          <circle cx="8.500" cy="8.500" r="7.800" fill="url(#led)" stroke="#0a600a" />
          <ellipse cx="8.500" cy="5" rx="4.500" ry="2.600" fill="#c8ffc8" opacity="0.7" />
        </svg>
        <div className="ml-[5px] text-[12px]">Conectado</div>
      </footer>
    </div>
  );
}
